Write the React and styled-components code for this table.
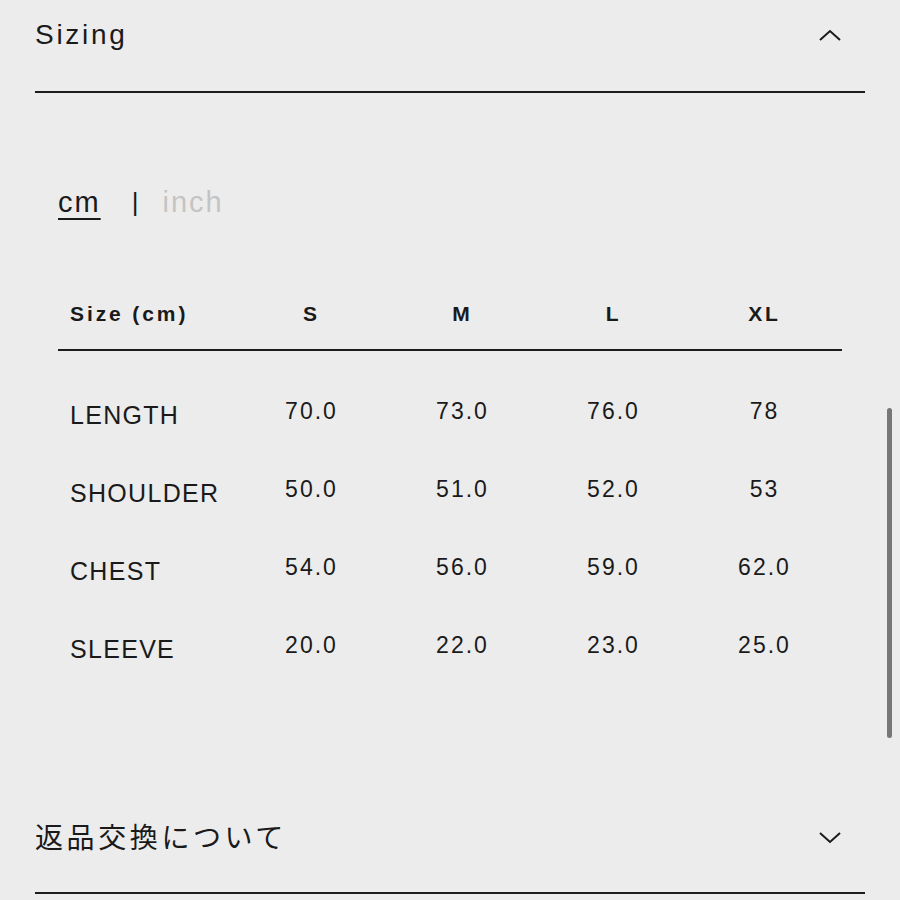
import React from "react";
import styled, { createGlobalStyle } from "styled-components";

const GlobalStyle = createGlobalStyle`
  html, body {
    margin: 0;
    padding: 0;
    background: #ececec;
  }
  body {
    font-family: "Liberation Sans", Arial, "Noto Sans CJK JP", sans-serif;
    color: #1a1a1a;
  }
`;

const Page = styled.div`
  padding: 0 35px;
  width: 830px;
  min-height: 900px;
  background: #ececec;
`;

const Header = styled.div`
  height: 93px;
  box-sizing: border-box;
  padding-bottom: 22px;
  display: flex;
  align-items: center;
  justify-content: space-between;
  border-bottom: 2px solid #1c1c1c;
`;

const Title = styled.h2`
  margin: 0;
  font-weight: 400;
  font-size: 28px;
  letter-spacing: ${(p) => (p.$jp ? "3.6px" : "2.7px")};
  font-family: ${(p) =>
    p.$jp
      ? `"Noto Sans CJK JP", sans-serif`
      : `"Liberation Sans", Arial, sans-serif`};
  line-height: 1;
`;

const Chevron = styled.svg`
  width: 26px;
  height: 16px;
  margin-right: 22px;
  margin-top: ${(p) => (p.$down ? "3px" : "0")};
`;

const Body = styled.div`
  padding: 0 23px 113px;
`;

const UnitToggle = styled.div`
  margin-top: 94px;
  height: 30px;
  display: flex;
  align-items: center;
  font-size: 29px;
  letter-spacing: 2px;
`;

const Unit = styled.span`
  color: ${(p) => (p.$active ? "#1a1a1a" : "#c4c4c4")};
  text-decoration: ${(p) => (p.$active ? "underline" : "none")};
  text-decoration-thickness: 2px;
  text-underline-offset: 6px;
`;

const Sep = styled.span`
  margin: 0 22px 0 31px;
  color: #1a1a1a;
  font-size: 26px;
`;

const Table = styled.div`
  margin-top: 62px;
`;

const Row = styled.div`
  display: grid;
  grid-template-columns: 178px repeat(4, 151px);
  height: ${(p) => (p.$head ? "70px" : "78px")};
  align-items: center;
  ${(p) => p.$head && "border-bottom: 2px solid #1c1c1c;"}
`;

const HeadCell = styled.div`
  font-weight: 700;
  font-size: 21px;
  letter-spacing: 2.9px;
  text-align: ${(p) => (p.$label ? "left" : "center")};
  padding-left: ${(p) => (p.$label ? "12px" : "0")};
`;

const Rows = styled.div`
  padding-top: 25px;
`;

const Label = styled.div`
  padding-left: 12px;
  font-size: 25px;
  letter-spacing: 1.3px;
`;

const Value = styled.div`
  text-align: center;
  font-size: 23px;
  letter-spacing: 2px;
  padding-bottom: 7px;
`;

const Scrollbar = styled.div`
  position: absolute;
  left: 887px;
  top: 408px;
  width: 5px;
  height: 330px;
  border-radius: 3px;
  background: #777;
`;

const sizes = ["S", "M", "L", "XL"];

const data = [
  ["LENGTH", ["70.0", "73.0", "76.0", "78"]],
  ["SHOULDER", ["50.0", "51.0", "52.0", "53"]],
  ["CHEST", ["54.0", "56.0", "59.0", "62.0"]],
  ["SLEEVE", ["20.0", "22.0", "23.0", "25.0"]],
];

const Icon = ({ up }) => (
  <Chevron
    $down={!up}
    viewBox="0 0 26 16"
    fill="none"
    stroke="#1a1a1a"
    strokeWidth="2"
  >
    <polyline points={up ? "3,13 13,4 23,13" : "3,4 13,13 23,4"} />
  </Chevron>
);

export default function App() {
  return (
    <>
      <GlobalStyle />
      <Page>
        <Header>
          <Title>Sizing</Title>
          <Icon up />
        </Header>
        <Body>
          <UnitToggle>
            <Unit $active>cm</Unit>
            <Sep>|</Sep>
            <Unit>inch</Unit>
          </UnitToggle>
          <Table>
            <Row $head>
              <HeadCell $label>Size (cm)</HeadCell>
              {sizes.map((s) => (
                <HeadCell key={s}>{s}</HeadCell>
              ))}
            </Row>
            <Rows>
              {data.map(([name, vals]) => (
                <Row key={name}>
                  <Label>{name}</Label>
                  {vals.map((v, i) => (
                    <Value key={i}>{v}</Value>
                  ))}
                </Row>
              ))}
            </Rows>
          </Table>
        </Body>
        <Header>
          <Title $jp>返品交換について</Title>
          <Icon />
        </Header>
      </Page>
      <Scrollbar />
    </>
  );
}
